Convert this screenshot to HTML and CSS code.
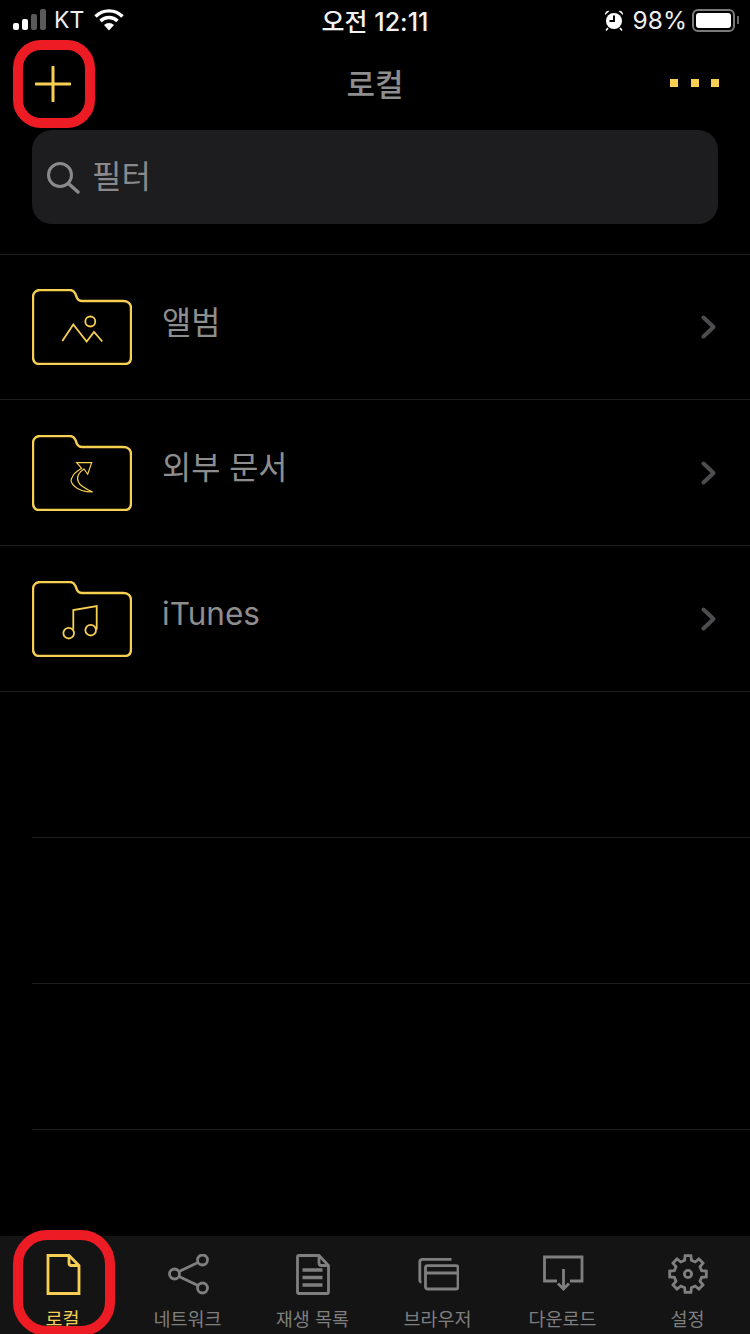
FILE: index.html
```html
<!DOCTYPE html>
<html lang="ko">
<head>
<meta charset="utf-8">
<title>로컬</title>
<link rel="stylesheet" href="styles.css">
</head>
<body>
<div class="phone">

	<!-- status bar -->
	<div class="status">
		<div class="status-side">
			<svg class="signal" width="34" height="22" viewBox="0 0 34 22">
				<rect x="0" y="14" width="6" height="7" rx="2" fill="#fff"/>
				<rect x="9" y="10" width="6" height="11" rx="2" fill="#fff"/>
				<rect x="18" y="5" width="6" height="16" rx="2" fill="#5a5a5a"/>
				<rect x="27" y="0" width="6" height="21" rx="2" fill="#5a5a5a"/>
			</svg>
			<span class="carrier">KT</span>
			<svg class="wifi" width="30" height="22" viewBox="0 0 30 22">
				<path d="M1.5 7.5 A19 19 0 0 1 28.5 7.5" fill="none" stroke="#fff" stroke-width="3.4"/>
				<path d="M6.5 12 A12 12 0 0 1 23.5 12" fill="none" stroke="#fff" stroke-width="3.4"/>
				<path d="M10 16 L15 21.5 L20 16 A7 7 0 0 0 10 16 Z" fill="#fff"/>
			</svg>
		</div>
		<div class="clock">오전 12:11</div>
		<div class="status-side">
			<svg class="alarm" width="20" height="22" viewBox="0 0 20 22">
				<circle cx="10" cy="12" r="8" fill="#fff"/>
				<path d="M10 6.5 V12 H5.5" fill="none" stroke="#000" stroke-width="2"/>
				<path d="M1 6 L5.5 2 A3.5 3.5 0 0 0 1 6 Z M19 6 L14.5 2 A3.5 3.5 0 0 1 19 6 Z" fill="#fff"/>
				<path d="M4 19 L2 21.5 M16 19 L18 21.5" stroke="#fff" stroke-width="1.6"/>
			</svg>
			<span class="battery-pct">98%</span>
			<div class="battery"><div class="battery-fill"></div></div>
			<div class="battery-cap"></div>
		</div>
	</div>

	<!-- nav bar -->
	<div class="nav">
		<svg width="36" height="36" viewBox="0 0 36 36">
			<path d="M18 1 V35 M1 18 H35" stroke="#f7cf52" stroke-width="3" stroke-linecap="round"/>
		</svg>
		<div class="nav-title">로컬</div>
		<div class="more"><i></i><i></i><i></i></div>
	</div>

	<div class="search">
		<svg width="34" height="34" viewBox="0 0 34 34">
			<circle cx="13" cy="15" r="11.5" fill="none" stroke="#8a8a8d" stroke-width="3"/>
			<path d="M22 24 L31 32" stroke="#8a8a8d" stroke-width="3.4" stroke-linecap="round"/>
		</svg>
		<span class="search-text">필터</span>
	</div>

	<!-- folders -->
	<div class="list">
		<div class="row">
			<svg class="folder" width="100" height="76" viewBox="0 0 100 76">
				<path class="f-line" d="M8 1 H38 C41 1 42 2 43.5 5 L45 9 C46 11 47 12 50 12 H91 C96 12 99 15 99 19 V68 C99 72 97 75 93 75 H7 C3 75 1 72 1 68 V8 C1 4 4 1 8 1 Z"/>
				<path class="f-thin" d="M30.3 52 L41.3 35.5 L54.7 52.5 L62 43 L70.3 52.5"/>
				<circle class="f-thin" cx="58.3" cy="32.5" r="5"/>
			</svg>
			<span class="row-label">앨범</span>
			<svg class="chev" width="18" height="26" viewBox="0 0 18 26"><path d="M3.5 3.5 L13.5 13 L3.5 22.5"/></svg>
		</div>
		<div class="row">
			<svg class="folder" width="100" height="76" viewBox="0 0 100 76">
				<path class="f-line" d="M8 1 H38 C41 1 42 2 43.5 5 L45 9 C46 11 47 12 50 12 H91 C96 12 99 15 99 19 V68 C99 72 97 75 93 75 H7 C3 75 1 72 1 68 V8 C1 4 4 1 8 1 Z"/>
				<path class="f-hair" d="M44.7 27.7 H59.7 L55.7 39.3 L52 34 C47 37 44 42 46.3 46.7 C48 51 54 54 60.7 57 C52 57 46 55 43 51.7 C39 48 38.5 45 39.7 43.3 C41 39 45 36 49.7 33.3 Z"/>
			</svg>
			<span class="row-label">외부 문서</span>
			<svg class="chev" width="18" height="26" viewBox="0 0 18 26"><path d="M3.5 3.5 L13.5 13 L3.5 22.5"/></svg>
		</div>
		<div class="row">
			<svg class="folder" width="100" height="76" viewBox="0 0 100 76">
				<path class="f-line" d="M8 1 H38 C41 1 42 2 43.5 5 L45 9 C46 11 47 12 50 12 H91 C96 12 99 15 99 19 V68 C99 72 97 75 93 75 H7 C3 75 1 72 1 68 V8 C1 4 4 1 8 1 Z"/>
				<path class="f-thin" d="M41.3 48.5 V29 L64.7 25 V48.5"/>
				<circle class="f-thin" cx="36.7" cy="52.2" r="5.3"/>
				<circle class="f-thin" cx="58.7" cy="49.2" r="5.3"/>
			</svg>
			<span class="row-label row-latin">iTunes</span>
			<svg class="chev" width="18" height="26" viewBox="0 0 18 26"><path d="M3.5 3.5 L13.5 13 L3.5 22.5"/></svg>
		</div>
		<div class="row row-empty"></div>
		<div class="row row-empty"></div>
		<div class="row row-empty"></div>
	</div>

	<!-- tabs -->
	<div class="tabs">
		<div class="tab tab-on">
			<svg width="36" height="42" viewBox="0 0 36 42">
				<path class="t-line" d="M3 1.5 H24 L34 11.5 V39.5 H3 Z"/>
				<path class="t-line" d="M24 1.5 V9 Q24 11.5 26.5 11.5 H34"/>
			</svg>
			<span>로컬</span>
		</div>
		<div class="tab">
			<svg width="42" height="42" viewBox="0 0 42 42">
				<circle class="t-line" cx="35.5" cy="6" r="5"/>
				<circle class="t-line" cx="7.5" cy="20" r="5"/>
				<circle class="t-line" cx="35.5" cy="34" r="5"/>
				<path class="t-line" d="M12 17.5 L31 8.5 M12 22.5 L31 31.5"/>
			</svg>
			<span>네트워크</span>
		</div>
		<div class="tab">
			<svg width="36" height="42" viewBox="0 0 36 42">
				<path class="t-line" d="M4 1.5 H24 L33.5 11.5 V38 Q33.5 39.5 32 39.5 H4 Q2.5 39.5 2.5 38 V3 Q2.5 1.5 4 1.5 Z"/>
				<path class="t-line" d="M24 1.5 V9 Q24 11.5 26.5 11.5 H33.5"/>
				<path class="t-bars" d="M7.5 16 H27.5 M7.5 23.5 H27.5 M7.5 31 H27.5"/>
			</svg>
			<span>재생 목록</span>
		</div>
		<div class="tab">
			<svg width="42" height="42" viewBox="0 0 42 42">
				<path class="t-line" d="M4.5 28 Q2.8 28 2.8 26 V8 Q2.8 5.3 5.5 5.3 H34.5"/>
				<rect class="t-line" x="8.5" y="11.7" width="32.5" height="23.3" rx="2"/>
				<path class="t-line" d="M8.5 19 H41"/>
			</svg>
			<span>브라우저</span>
		</div>
		<div class="tab">
			<svg width="42" height="42" viewBox="0 0 42 42">
				<path class="t-line" d="M15 27 H2.5 V3 H40 V27 H28"/>
				<path class="t-line" d="M21.5 15 V35 M16 29.5 L21.5 35 L27 29.5"/>
			</svg>
			<span>다운로드</span>
		</div>
		<div class="tab">
			<svg width="42" height="42" viewBox="0 0 42 42">
				<path class="t-line" d="M17.6 6.4 L18.1 1.7 H23.9 L24.4 6.4 L28.2 8 L31.9 5 L36 9.1 L33 12.8 L34.6 16.6 L39.3 17.1 V22.9 L34.6 23.4 L33 27.2 L36 30.9 L31.9 35 L28.2 32 L24.4 33.6 L23.9 38.3 H18.1 L17.6 33.6 L13.8 32 L10 35 L6 30.9 L9 27.2 L7.4 23.4 L2.7 22.9 V17.1 L7.4 16.6 L9 12.8 L6 9.1 L10 5 L13.8 8 Z"/>
				<circle class="t-line" cx="21" cy="20" r="3.6"/>
			</svg>
			<span>설정</span>
		</div>
	</div>

	<!-- red annotation boxes -->
	<div class="mark mark-add"></div>
	<div class="mark mark-tab"></div>
</div>
</body>
</html>
```

FILE: styles.css
```css
html, body {
	margin: 0;
	background: #000;
}
.phone {
	position: relative;
	width: 750px;
	height: 1334px;
	overflow: hidden;
	background: #000;
	display: flex;
	flex-direction: column;
	font-family: "Inter", "Noto Sans CJK KR", sans-serif;
}

/* status bar */
.status {
	height: 40px;
	display: flex;
	align-items: center;
	justify-content: space-between;
	padding: 0 11px 0 13px;
	color: #fff;
	position: relative;
}
.status-side {
	display: flex;
	align-items: center;
}
.carrier {
	font-size: 23px;
	margin-left: 7px;
	margin-right: 10px;
	color: #eee;
}
.clock {
	position: absolute;
	left: 0;
	right: 0;
	text-align: center;
	font-size: 25px;
	font-weight: 500;
	color: #f2f2f2;
}
.battery-pct {
	font-size: 24.5px;
	margin-left: 9px;
	margin-right: 5px;
	color: #eee;
}
.battery {
	width: 35px;
	height: 15px;
	padding: 2px;
	border: 2px solid #7a7a7a;
	border-radius: 6px;
}
.battery-fill {
	height: 15px;
	background: #fff;
	border-radius: 3px;
}
.battery-cap {
	width: 2px;
	height: 8px;
	margin-left: 2px;
	background: #666;
}

/* nav */
.nav {
	height: 90px;
	display: flex;
	align-items: center;
	justify-content: space-between;
	padding: 0 31px 2px 35px;
	box-sizing: border-box;
	position: relative;
}
.nav-title {
	position: absolute;
	left: 0;
	right: 0;
	text-align: center;
	font-size: 31px;
	font-weight: 500;
	color: #8e8e8e;
	padding-bottom: 4px;
}
.more {
	display: flex;
	gap: 12.5px;
	margin-bottom: 2px;
}
.more i {
	width: 8px;
	height: 8px;
	background: #f7cf52;
}

.search {
	margin: 0 32px;
	height: 94px;
	border-radius: 20px;
	background: #1d1d1f;
	display: flex;
	align-items: center;
	padding-left: 15px;
}
.search-text {
	margin-left: 11px;
	font-size: 32px;
	color: #8a8a8d;
	line-height: 1;
}

/* list */
.list {
	margin-top: 30px;
	border-top: 1px solid #1f1f1f;
}
.row {
	height: 145px;
	border-bottom: 1px solid #1f1f1f;
	display: flex;
	align-items: center;
	padding: 0 32px;
}
.row:first-child {
	height: 144px;
}
.row-empty {
	margin-left: 32px;
	padding: 0;
}
.folder {
	flex: none;
}
.row-label {
	flex: 1;
	margin-left: 30px;
	margin-bottom: 15px;
	font-size: 31.7px;
	color: #8e8e8e;
}
.row-latin {
	font-size: 31.5px;
	margin-bottom: 10px;
}
.chev path {
	fill: none;
	stroke: #4d4d50;
	stroke-width: 4;
	stroke-linecap: round;
	stroke-linejoin: round;
}
.f-line {
	fill: none;
	stroke: #f7cf52;
	stroke-width: 2.4;
}
.f-thin {
	fill: none;
	stroke: #f7cf52;
	stroke-width: 1.8;
}
.f-hair {
	fill: none;
	stroke: #f7cf52;
	stroke-width: 1.2;
}

/* tabs */
.tabs {
	position: absolute;
	left: 0;
	right: 0;
	bottom: 0;
	height: 98px;
	background: #141414;
	display: grid;
	grid-template-columns: repeat(6, 125px);
	padding-top: 18px;
	box-sizing: border-box;
}
.tab {
	display: flex;
	flex-direction: column;
	align-items: center;
	gap: 12px;
	font-size: 18.5px;
	color: #7f7f7f;
	white-space: nowrap;
}
.tab span {
	line-height: 22px;
}
.t-line {
	fill: none;
	stroke: #7f7f7f;
	stroke-width: 2.8;
}
.t-bars {
	fill: none;
	stroke: #7f7f7f;
	stroke-width: 3.6;
}
.tab-on {
	color: #f7cf52;
}
.tab-on .t-line {
	stroke: #f7cf52;
}

/* red annotations over the screenshot */
.mark {
	position: absolute;
	border: 10px solid #ed1c24;
	box-sizing: border-box;
	border-radius: 28px;
}
.mark-add {
	left: 13px;
	top: 40px;
	width: 82px;
	height: 88px;
}
.mark-tab {
	left: 13px;
	top: 1230px;
	width: 102px;
	height: 106px;
	border-radius: 34px;
}
```
